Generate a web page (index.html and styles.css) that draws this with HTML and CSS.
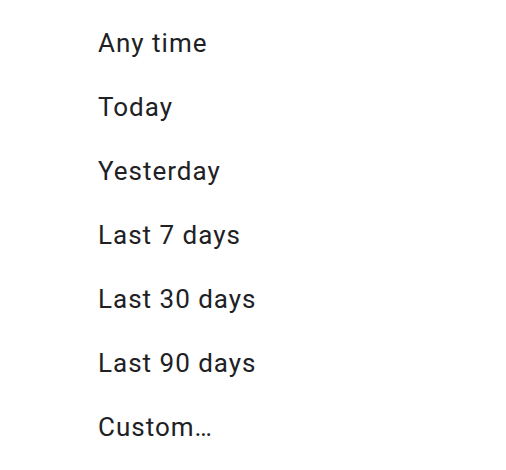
FILE: index.html
```html
<!DOCTYPE html>
<html>
<head>
<meta charset="utf-8">
<link rel="stylesheet" href="styles.css">
</head>
<body>
<ul class="menu">
  <li class="item">Any time</li>
  <li class="item">Today</li>
  <li class="item">Yesterday</li>
  <li class="item">Last 7 days</li>
  <li class="item">Last 30 days</li>
  <li class="item">Last 90 days</li>
  <li class="item">Custom…</li>
</ul>
</body>
</html>
```
FILE: styles.css
```css
html, body {
  margin: 0;
  padding: 0;
  background: #ffffff;
}
.menu {
  list-style: none;
  margin: 0;
  padding: 11px 0 0 98px;
  font-family: Roboto, "Noto Sans", sans-serif;
  font-size: 26px;
  letter-spacing: 1px;
  color: #202124;
}
.item {
  height: 64px;
  line-height: 64px;
  white-space: nowrap;
}
```
